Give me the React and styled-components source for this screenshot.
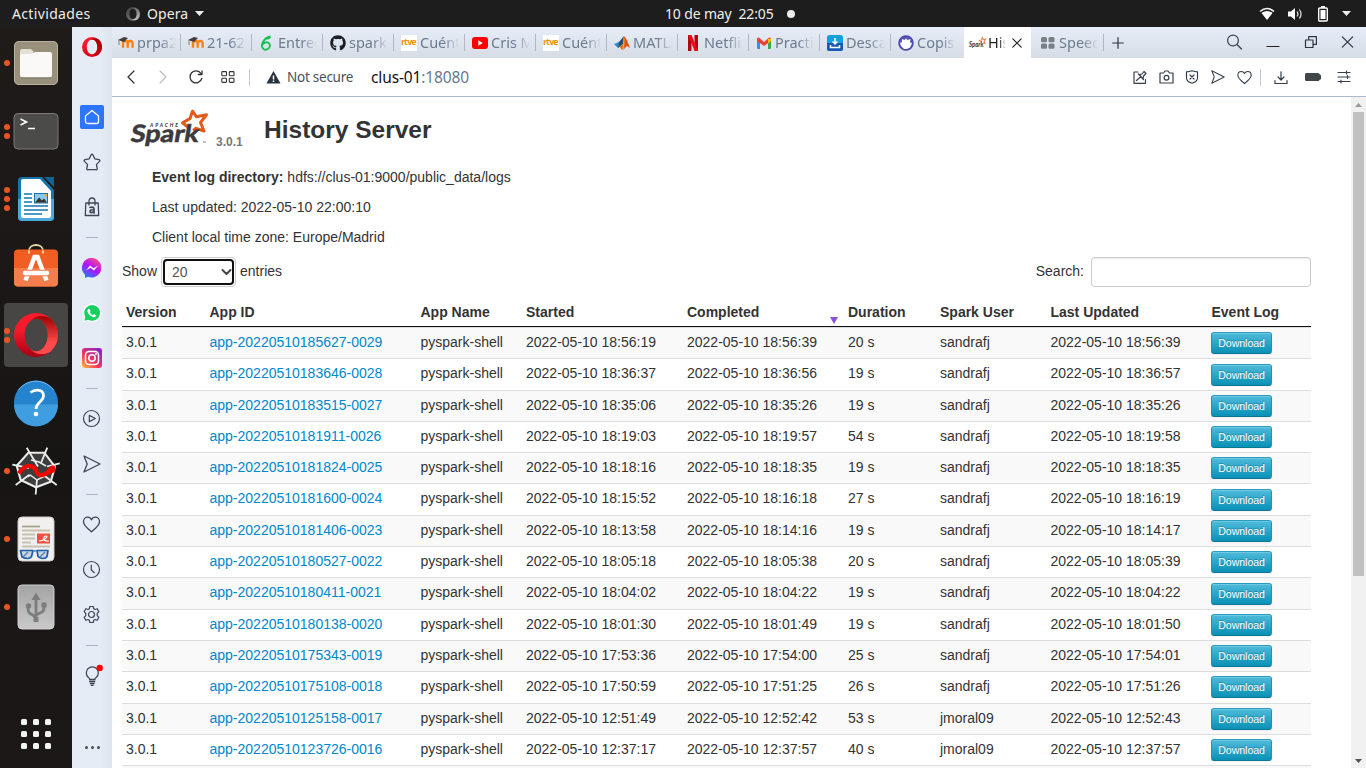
import React from "react";
import styled, { createGlobalStyle, css } from "styled-components";
import { FaGithub } from "react-icons/fa";

const Global = createGlobalStyle`
  * { box-sizing: border-box; }
  html, body { margin: 0; padding: 0; overflow: hidden; }
  body { font-family: "Liberation Sans", Arial, sans-serif; font-size: 14px; line-height: 20px; color: #333; }
  svg { display: block; flex: none; overflow: visible; }
`;

const ui = css`font-family: "Noto Sans", "Open Sans", sans-serif;`;

const Desktop = styled.div`
  width: 1366px; height: 768px; overflow: hidden;
  display: flex; flex-direction: column; background: #1b1817;
`;
const TopBar = styled.header`
  ${ui}
  height: 27px; flex: none; background: #1d1d1d; color: #eeeeec;
  display: grid; grid-template-columns: 126px 539px 1fr auto; align-items: center;
  font-size: 14px; line-height: 27px;
`;
const Activities = styled.div`padding-left: 12px; letter-spacing: 0.35px;`;
const AppMenu = styled.div`display: flex; align-items: center; gap: 7px; letter-spacing: 0.1px;`;
const Clock = styled.div`display: flex; align-items: center; white-space: pre; font-size: 14px; letter-spacing: -0.15px;`;
const ClockText = styled.span`width: 122px;`;
const Bullet = styled.span`width: 8px; height: 8px; border-radius: 50%; background: #eeeeec;`;
const Tray = styled.div`display: flex; align-items: center; padding-right: 11px;`;
const Slot = styled.span`
  width: ${(p) => p.$w}px; height: 100%; flex: none;
  display: flex; align-items: center; justify-content: center;
`;
const Main = styled.div`flex: 1; display: flex; min-height: 0;`;

const Dock = styled.nav`
  width: 72px; flex: none; background: linear-gradient(180deg, #1f1b19, #171514 60%, #1c1817);
  display: flex; flex-direction: column; padding: 2px 0 0;
`;
const DockItem = styled.div`
  height: 68px; padding: 2px 4px; display: flex; align-items: center; position: relative;
`;
const DockTile = styled.div`
  width: 64px; height: 64px; border-radius: 4px; display: flex; align-items: center; justify-content: center;
  background: ${(p) => (p.$active ? "#484645" : "transparent")};
`;
const Marks = styled.div`
  position: absolute; left: 4px; top: 0; bottom: 0; width: 6px;
  display: flex; flex-direction: column; justify-content: center; gap: 3px;
`;
const Mark = styled.i`width: 6px; height: 6px; border-radius: 50%; background: #e95420;`;
const AppsGrid = styled.div`
  margin: auto 0 19px 21px; display: grid; grid-template-columns: repeat(3, 6px); gap: 6px;
`;
const AppsDot = styled.i`width: 6px; height: 6px; border-radius: 1.5px; background: #f2f2f0;`;

const Browser = styled.div`flex: 1; display: flex; min-width: 0; background: #e6ecf6;`;
const SideBar = styled.aside`
  width: 40px; flex: none; display: flex; flex-direction: column; align-items: center;
  background: linear-gradient(90deg, #e5ecf6 0 70%, #dde4ee); color: #3c4654;
`;
const SideLogo = styled.div`height: 67px; padding-top: 10px;`;
const SideItem = styled.div`
  height: 45px; width: 40px; padding-top: 1px; flex: none; display: flex; align-items: center; justify-content: center;
`;
const SideRule = styled.div`height: 16px; flex: none; padding-top: 8px; &::before { content: ""; display: block; width: 12px; height: 1px; background: #a9b4c6; }`;
const HomeTile = styled.div`
  width: 24px; height: 24px; border-radius: 2px; background: #2d74ff; color: #fff;
  display: flex; align-items: center; justify-content: center;
`;
const SideMore = styled.div`margin: auto 0 19px; display: flex; gap: 3px;`;
const MoreDot = styled.i`width: 3px; height: 3px; border-radius: 50%; background: #454d59;`;

const Window = styled.div`flex: 1; min-width: 0; display: flex; flex-direction: column; background: #fff;`;
const TabStrip = styled.div`
  height: 31px; flex: none; display: flex; align-items: stretch;
  background: linear-gradient(180deg, #e6edf8, #d6dde6);
`;
const Tab = styled.div`
  ${ui}
  width: ${(p) => p.$w || 71}px; flex: none; display: flex; align-items: center; gap: ${(p) => p.$gap ?? 3}px;
  padding-left: ${(p) => p.$pl ?? 7}px; position: relative; color: ${(p) => (p.$active ? "#222" : "#6c7b8e")};
  background: ${(p) => (p.$active ? "#fff" : "transparent")};
  border-radius: 2px 2px 0 0;
`;
const TabRule = styled.i`position: absolute; right: 0; top: 7px; width: 1px; height: 17px; background: #aeb8c6;`;
const TabLabel = styled.span`
  width: ${(p) => p.$w || 39}px; overflow: hidden; white-space: nowrap; font-size: 14.5px; line-height: 20px; margin-top: -1px;
  -webkit-mask-image: linear-gradient(90deg, #000 60%, transparent 100%);
  mask-image: linear-gradient(90deg, #000 60%, transparent 100%);
`;
const StripSpace = styled.div`flex: 1;`;
const ToolBar = styled.div`
  height: 39px; flex: none; border-bottom: 1px solid #acb9cc; background: #fff; color: #36404c;
  display: flex; align-items: center; padding: 0 4px 0 3px;
`;
const ToolRule = styled.i`width: 1px; height: 17px; background: #c5cad1; flex: none;`;
const Security = styled.span`${ui} width: 84px; padding-left: 6px; font-size: 13.5px; letter-spacing: -0.25px; color: #48515c; white-space: nowrap;`;
const Address = styled.span`${ui} flex: 1; padding-left: 6px; font-size: 15.5px; letter-spacing: -0.12px; color: #69788c;`;
const Host = styled.span`color: #111;`;

const View = styled.div`flex: 1; min-height: 0; display: flex;`;
const Page = styled.main`flex: 1; min-width: 0; overflow: hidden; padding: 12px 40px 0 10px;`;
const PageHead = styled.div`height: 50px; padding-left: 8px; display: flex;`;
const Version = styled.span`width: 52px; padding-left: 4px; margin-top: 23px; font-size: 12px; font-weight: bold; color: #777;`;
const Title = styled.h3`margin: 1px 0 0; font-size: 24.5px; line-height: 40px; font-weight: bold;`;
const Facts = styled.ul`list-style: none; margin: 8px 0 0; padding: 0 0 0 30px;`;
const Fact = styled.li`height: 30px; line-height: 20px;`;
const Controls = styled.div`height: 30px; display: flex; align-items: flex-start; justify-content: space-between;`;
const Control = styled.label`display: flex; line-height: 28px;`;
const Picker = styled.span`
  width: 75px; height: 30px; margin: 0 4px; border: 1px solid #ccc; border-radius: 4px; padding: 1px; display: block;
`;
const PickerInner = styled.span`
  height: 26px; border: 2px solid #101010; border-radius: 4px; color: #555; padding: 0 0 0 7px;
  display: flex; align-items: center; justify-content: space-between; line-height: 22px;
`;
const Search = styled.input`
  width: 220px; height: 30px; margin-left: 7px; border: 1px solid #ccc; border-radius: 4px; background: #fff;
  box-shadow: inset 0 1px 1px rgba(0, 0, 0, 0.075); outline: none;
`;
const Table = styled.div`margin-top: 10px;`;
const cols = css`display: grid; grid-template-columns: 83.5px 211px 105.5px 161px 161px 92px 110.5px 161px 1fr;`;
const HeadRow = styled.div`${cols} height: 30px; border-bottom: 1px solid #111; font-weight: bold;`;
const HeadCell = styled.div`padding: 5px 4px 0; position: relative; white-space: nowrap;`;
const SortMark = styled.i`
  position: absolute; right: 6px; bottom: 2px; border: 4px solid transparent; border-top: 7px solid #8a55dc; border-bottom: 0;
`;
const Row = styled.div`
  ${cols} height: 31.31px; border-top: 1px solid #ddd; background: ${(p) => (p.$odd ? "#f9f9f9" : "#fff")};
`;
const Cell = styled.div`padding: 4px 4px 0; white-space: nowrap;`;
const Link = styled.a`color: #0088cc; text-decoration: none;`;
const Download = styled.button`
  display: block; width: 61px; height: 22px; margin: 0.22px 0 0 -0.4px; padding: 0; border: 1px solid #1f8fb0;
  border-color: #2a9cbd #1f93b4 #0c7896; border-radius: 3px;
  background: linear-gradient(180deg, #4fbbdb, #0891b6); color: #fff;
  font: 10.5px/20px "Liberation Sans", Arial, sans-serif; text-shadow: 0 -1px 0 rgba(0, 0, 0, 0.25);
  box-shadow: inset 0 1px 0 rgba(255, 255, 255, 0.2), 0 1px 2px rgba(0, 0, 0, 0.05);
`;
const ScrollTrack = styled.div`
  width: 15px; flex: none; background: #f1f1f1; display: flex; flex-direction: column; align-items: center; justify-content: space-between;
`;
const ScrollThumb = styled.div`width: 11px; height: 464px; background: #c1c1c1; margin-bottom: auto;`;
const ScrollCap = styled.div`height: 15px; display: flex; align-items: center;`;

const Line = ({ w = 16, h = w, box, sw = 1.2, children, color = "currentColor" }) => (
  <svg width={w} height={h} viewBox={box || `0 0 ${w} ${h}`} fill="none" stroke={color} strokeWidth={sw} strokeLinejoin="round" strokeLinecap="round">
    {children}
  </svg>
);

const OperaRing = ({ size = 20, mono, light }) => {
  const id = mono ? "om" : light ? "ol" : "od";
  return (
    <svg width={size} height={size} viewBox="0 0 24 24">
      <defs>
        <linearGradient id={`${id}a`} x1="0" y1="0" x2="0" y2="1">
          <stop offset="0" stopColor={mono ? "#444" : "#ff1b2d"} />
          <stop offset=".4" stopColor={mono ? "#555" : "#f31a2b"} />
          <stop offset="1" stopColor={mono ? "#6a6a6a" : light ? "#a70014" : "#e00012"} />
        </linearGradient>
        <linearGradient id={`${id}b`} x1="0" y1="0" x2="0" y2="1">
          <stop offset="0" stopColor={mono ? "#666" : "#9c0000"} />
          <stop offset=".7" stopColor={mono ? "#aaa" : light ? "#ff4b4b" : "#c40010"} />
          <stop offset="1" stopColor={mono ? "#bbb" : light ? "#ff4b4b" : "#d40010"} />
        </linearGradient>
      </defs>
      <path fillRule="evenodd" fill={`url(#${id}a)`} d="M12 0a12 12 0 1 0 0 24a12 12 0 1 0 0-24zM12.100 3.100c3.500 0 6.300 4 6.300 8.900s-2.800 8.900-6.300 8.900s-6.300-4-6.300-8.900s2.800-8.900 6.300-8.900z" />
      <path fill={`url(#${id}b)`} d="M8.050 5.240c1.720-2.234 4.280-3.654 7.140-3.654c1.760 0 3.400.54 4.810 1.470A12 12 0 0 1 20 20.945c-1.400.934-3.050 1.470-4.800 1.470c-2.860 0-5.420-1.418-7.140-3.654C9.200 20.100 10.600 20.900 12.100 20.900c3.500 0 6.300-4 6.300-8.900s-2.800-8.900-6.300-8.900c-1.500 0-2.900.8-4.050 2.140z" />
    </svg>
  );
};

const Heart = ({ w = 16 }) => (
  <Line w={w} h={w} box="0 0 18 18" sw={1.3}><path d="M9 16.300C5 13 1 10 1 6.300C1 3.500 3 1.700 5.200 1.700C7 1.700 8.300 2.800 9 4.300C9.700 2.800 11 1.700 12.800 1.700C15 1.700 17 3.500 17 6.300C17 10 13 13 9 16.300z" /></Line>
);
const Send = ({ w = 16 }) => (
  <Line w={w} h={w} box="0 0 18 18" sw={1.3}><path d="M1 1l16 8L1 17l3.200-8z" /></Line>
);

const FilesIcon = () => (
  <svg width="46" height="46"><rect x="1" y="1" width="44" height="44" rx="5" fill="#99907b" /><rect x="1.500" y="1.500" width="43" height="43" rx="4.500" fill="none" stroke="#b9b19f" />
    <path d="M7 16V11a2 2 0 0 1 2-2h9l3 3h-1v8H7z" fill="#e3dfd3" /><path d="M7 16q0-2 2-2h9l4-2h15a2 2 0 0 1 2 2v21a2.500 2.500 0 0 1-2.500 2.500h-27A2.500 2.500 0 0 1 7 35z" fill="#faf9f8" /><path d="M8 38h30" stroke="#777060" /></svg>
);
const TerminalIcon = () => (
  <svg width="46" height="38"><rect x="1" y="1.500" width="44" height="35.500" rx="4" fill="#4b4b4a" stroke="#7a7978" /><path d="M7.500 7l6 3-6 3M15 16.500h7" fill="none" stroke="#fff" strokeWidth="1.600" /></svg>
);
const WriterIcon = () => (
  <svg width="38" height="46"><path d="M5 1h20l12 13v27a4 4 0 0 1-4 4H5a4 4 0 0 1-4-4V5a4 4 0 0 1 4-4z" fill="#1375ac" /><path d="M1 23h36v18a4 4 0 0 1-4 4H5a4 4 0 0 1-4-4z" fill="#4ba9dc" />
    <path d="M6 3h17l11 12v25a2 2 0 0 1-2 2H6a2 2 0 0 1-2-2V5a2 2 0 0 1 2-2z" fill="#fff" /><path d="M27 1h10v10z" fill="#0d659a" />
    <path d="M7 18h8M7 22h8M7 26h8M7 30h24M7 34h24M7 38h18" stroke="#1578b1" strokeWidth="1.700" /><rect x="17.500" y="17.500" width="13" height="9.500" fill="#8ec7e8" stroke="#1578b1" /><path d="M18 26.500l4-5 3 3 2-2 3 4z" fill="#333" /><path d="M27 18h3v3z" fill="#f2ac20" /></svg>
);
const SoftwareIcon = () => (
  <svg width="46" height="46"><path d="M16 7c0-8 14-8 14 0" fill="none" stroke="#e8d7a5" strokeWidth="1.800" /><rect x="1" y="5.500" width="44" height="37" rx="4" fill="#f15e24" /><path d="M1 24h44v14.500a4 4 0 0 1-4 4H5a4 4 0 0 1-4-4z" fill="#f47d4c" />
    <path d="M16 6.500v3M30 6.500v3" stroke="#e8d7a5" strokeWidth="1.800" /><path d="M12.500 36.500L21.500 13h3l9 23.500" fill="none" stroke="#fff" strokeWidth="4.500" /><path d="M12 29h22" stroke="#f47d4c" strokeWidth="6.500" strokeLinecap="round" /><path d="M12 29h22" stroke="#fff" strokeWidth="4.500" strokeLinecap="round" /></svg>
);
const HelpIcon = () => (
  <svg width="46" height="46"><circle cx="23" cy="22.500" r="22" fill="#2684cf" /><path d="M1 24.500h44a22 22 0 0 1-44 0z" fill="#3f9ee0" /><path d="M5 10.500a22 22 0 0 1 36 0" fill="none" stroke="#6db9ee" />
    <path d="M17.500 12.500c2-1.500 4-2.300 6.500-2.300c4.500 0 6.500 2.500 6.500 5.800c0 5.500-7.500 6-7.500 13" fill="none" stroke="#fff" strokeWidth="2.700" /><circle cx="23" cy="34" r="2.300" fill="#fff" /></svg>
);
const SpyderIcon = () => (
  <svg width="50" height="50"><path d="M17.300 6.700h16L44 20.700l-4.300 15L25 41.300 9.700 34l-4-14.300z" fill="#3d3d3d" /><g fill="none" stroke="#ececec">
    <path strokeWidth="2.100" d="M17.300 6.700h16L44 20.700l-4.300 15L25 41.300 9.700 34l-4-14.300z" />
    <path strokeWidth="1.800" d="M15.700 1.700L27 20.500M36.300 1.700L30 17M48.700 17.300L36 20.500M45.700 39L31 28M24.700 48.500L26 33M4.700 39L18 29M1.300 18.700L18 22" />
    <path strokeWidth="1.500" d="M20 14l8 2 7 4M34 30l-8 4-7-5-2 2" /></g>
    <path d="M8 27.500Q13 19.500 18.500 20t7 5.500 7.500 3 6-5" fill="none" stroke="#ee0800" strokeWidth="4.300" /><path d="M31 28l6-5q1-3 4-3.500 4-.5 3.500 4T38 27t-5 3.500z" fill="#ee0800" /></svg>
);
const DocViewerIcon = () => (
  <svg width="38" height="46"><rect x="1" y="1" width="36" height="44" rx="4" fill="#f1f0ee" stroke="#c9c8c5" /><path d="M5 10.500h18" stroke="#a8a18d" strokeWidth="1.800" /><path d="M5 14.500h28M5 18.500h13M5 22.500h13M5 26.500h9M5 30.500h28" stroke="#c6c1b1" strokeWidth="1.800" />
    <rect x="20" y="17.500" width="13" height="10" fill="#f2503f" /><path d="M22 25c5 0 10-5 7-5s-4 6 3 5" fill="none" stroke="#fff" strokeWidth="1.200" />
    <path d="M3.500 34.500h12.500l-1.500 6q-1 2-4 2T5 41zM20 34.500h11l-1 6q-1 2-4 2t-5-2z" fill="#ccd3da" stroke="#1d5fa8" strokeWidth="1.700" strokeLinejoin="round" /><path d="M16 35.500q2-1.500 4 0M6 41l5-5M23 41l5-5" fill="none" stroke="#4a82bd" strokeWidth="1.300" /></svg>
);
const UsbIcon = () => (
  <svg width="38" height="46"><defs><linearGradient id="ub" x1="0" y1="0" x2="0" y2="1"><stop offset="0" stopColor="#a4a4a4" /><stop offset="1" stopColor="#c9c9c9" /></linearGradient></defs><rect x="1" y="1" width="36" height="44" rx="4" fill="url(#ub)" stroke="#cfcfcf" />
    <g fill="none" stroke="#7d7d7d" strokeWidth="2.800"><path d="M19 14v24M19 33l-6-3.500q-2-1-2-5.500M19 31l6-3q2-1 2-6" /></g><path d="M14.500 16L19 8.500l4.500 7.500z" fill="#7d7d7d" /><rect x="16.500" y="33" width="5" height="5" fill="#7d7d7d" /><circle cx="11.500" cy="22" r="2.700" fill="#7d7d7d" /><rect x="24.500" y="18.500" width="5" height="5" fill="#7d7d7d" /></svg>
);

const Moodle = () => (
  <svg width="16" height="16"><path d="M5 12.800V7.500M5 8.500Q5 6 7.300 6t2.400 2.500V12.800M9.700 8.500Q9.700 6 12.200 6t2.400 2.500V12.800" fill="none" stroke="#f98012" strokeWidth="2.400" /><path d="M0 5l6-3 4 1-4 4-3-1z" fill="#443d3a" /><path d="M1 5v5" stroke="#8b7b6d" /></svg>
);
const Overleaf = () => (
  <svg width="16" height="16"><path d="M11.500 1.500Q6.500 2.500 4 7t.5 7Q7.500 16 10 13t-1-5.500Q6 6.500 3.500 9.500M5.500 3.500q3.500.8 6-1.500" fill="none" stroke="#13c04f" strokeWidth="1.800" /></svg>
);
const RtveTile = styled.span`
  ${ui} width: 16px; height: 16px; background: #fff; color: #f39200; font-size: 9px; line-height: 14px; font-weight: bold;
  letter-spacing: -0.9px; flex: none; white-space: nowrap;
`;
const YouTube = () => (<svg width="16" height="16"><rect y="2" width="16" height="12" rx="3" fill="#f00" /><path d="M6.300 5.300v5.400L10.800 8z" fill="#fff" /></svg>);
const Matlab = () => (<svg width="16" height="16"><path d="M0 9l5-2 3 2-4 4z" fill="#2c8fc9" /><path d="M5 7l5-6-1 8-5 4z" fill="#264f72" /><path d="M10 1q2 1 6 12l-3-2-3 3-2 1-2-3 3-3z" fill="#d9541a" /><path d="M10 1q1 5 0 13l-2 1z" fill="#f5a623" /></svg>);
const Netflix = () => (<svg width="16" height="16"><path d="M3 0h3.500v16H3zM9.500 0H13v16H9.500z" fill="#b1060f" /><path d="M3 0h3.500L13 16H9.500z" fill="#ee0a16" /></svg>);
const Gmail = () => (<svg width="16" height="16"><path d="M1 4.500h3v9.500H2a1 1 0 0 1-1-1z" fill="#4285f4" /><path d="M12 4.500h3V13a1 1 0 0 1-1 1h-2z" fill="#34a853" /><path d="M1 3.500q1-2 3 0l4 3.500 4-3.500q2-2 3 0V6l-7 5-7-5z" fill="#ea4335" /><path d="M12 4l3-.5V6l-3 2.500z" fill="#fbbc04" /></svg>);
const DownTile = () => (<svg width="16" height="16"><rect width="16" height="16" rx="2.500" fill="#12a0e0" /><path d="M0 8h16v5.500a2.500 2.500 0 0 1-2.500 2.500h-11A2.500 2.500 0 0 1 0 13.500z" fill="#1559b5" /><path d="M8 3v5.500M5.500 6.500L8 9l2.500-2.500M3.500 10v2.500h9V10" fill="none" stroke="#fff" strokeWidth="1.500" /></svg>);
const Copis = () => (<svg width="16" height="16"><circle cx="8" cy="8" r="7" fill="#5a55b8" stroke="#4a45b0" strokeWidth="1.500" /><path d="M4 4l2.500 1L8 3.500 9.500 5l3-1-.5 3 2 1.500-2 4-3 1.500H6L3 11 2 8l2-1z" fill="#fff" /></svg>);
const SpeedDial = () => (<svg width="14" height="12"><g fill="#7b8087"><rect width="6" height="5.300" rx="1.500" /><rect x="7.500" width="6" height="5.300" rx="1.500" /><rect y="6.500" width="6" height="5.300" rx="1.500" /><rect x="7.500" y="6.500" width="6" height="5.300" rx="1.500" /></g></svg>);

const SparkStar = () => (
  <path d="M58.500 18.500L52.500 13.800L60 9.600L62.500 2.200L66.500 7.800L76.500 5.800L70.500 13.500L74 22L66 19.300L63 21.500" fill="none" stroke="#e25a1c" strokeWidth="3" strokeLinejoin="round" />
);
const SparkLogo = () => (
  <svg width="82" height="42" viewBox="0 0 82 42">
    <SparkStar />
    <text x="20" y="17.700" fontFamily="Lato" fontWeight="900" fontStyle="italic" fontSize="5" fill="#3c3a3e" textLength="28">APACHE</text>
    <g transform="skewX(5)">
      <text x="-1" y="33" fontFamily="Lato" fontWeight="700" fontSize="24" fill="#3c3a3e" stroke="#3c3a3e" strokeWidth=".6" textLength="68" lengthAdjust="spacingAndGlyphs" transform="skewX(-14)"><tspan dx="6">Spark</tspan></text>
    </g>
    <path d="M73 33h3" stroke="#888" />
  </svg>
);
const SparkFavicon = () => (
  <svg width="17" height="16" viewBox="0 0 17 16">
    <path d="M12 7.500L10.500 5.500l2-.5.800-2.500 1.200 2 2-.3-1.200 2 .7 2.300-2-.7" fill="none" stroke="#ee8a5c" strokeWidth="1.200" />
    <text x="0" y="11.500" fontFamily="Lato" fontWeight="900" fontStyle="italic" fontSize="7" fill="#444" textLength="14.500" lengthAdjust="spacingAndGlyphs">Spark</text>
  </svg>
);

const tabs = [
  ["prpa2", <Moodle />], ["21-62", <Moodle />], ["Entreg", <Overleaf />], ["spark", <FaGithub size={16} color="#1b1f23" />],
  ["Cuénta", <RtveTile>rtve</RtveTile>], ["Cris M", <YouTube />], ["Cuénta", <RtveTile>rtve</RtveTile>], ["MATLA", <Matlab />],
  ["Netflix", <Netflix />], ["Practi", <Gmail />], ["Descar", <DownTile />], ["Copist", <Copis />],
];

const dock = [
  [<FilesIcon />, 1], [<TerminalIcon />, 2], [<WriterIcon />, 3], [<SoftwareIcon />, 0], [<OperaRing size={44} light />, 2, true],
  [<HelpIcon />, 0], [<SpyderIcon />, 1], [<DocViewerIcon />, 1], [<UsbIcon />, 1],
];

const rows = [
  ["185627-0029", "18:56:19", "18:56:39", "20 s", "sandrafj", "18:56:39"],
  ["183646-0028", "18:36:37", "18:36:56", "19 s", "sandrafj", "18:36:57"],
  ["183515-0027", "18:35:06", "18:35:26", "19 s", "sandrafj", "18:35:26"],
  ["181911-0026", "18:19:03", "18:19:57", "54 s", "sandrafj", "18:19:58"],
  ["181824-0025", "18:18:16", "18:18:35", "19 s", "sandrafj", "18:18:35"],
  ["181600-0024", "18:15:52", "18:16:18", "27 s", "sandrafj", "18:16:19"],
  ["181406-0023", "18:13:58", "18:14:16", "19 s", "sandrafj", "18:14:17"],
  ["180527-0022", "18:05:18", "18:05:38", "20 s", "sandrafj", "18:05:39"],
  ["180411-0021", "18:04:02", "18:04:22", "19 s", "sandrafj", "18:04:22"],
  ["180138-0020", "18:01:30", "18:01:49", "19 s", "sandrafj", "18:01:50"],
  ["175343-0019", "17:53:36", "17:54:00", "25 s", "sandrafj", "17:54:01"],
  ["175108-0018", "17:50:59", "17:51:25", "26 s", "sandrafj", "17:51:26"],
  ["125158-0017", "12:51:49", "12:52:42", "53 s", "jmoral09", "12:52:43"],
  ["123726-0016", "12:37:17", "12:37:57", "40 s", "jmoral09", "12:37:57"],
];
const heads = ["Version", "App ID", "App Name", "Started", "Completed", "Duration", "Spark User", "Last Updated", "Event Log"];

const SystemBar = () => (
  <TopBar>
    <Activities>Actividades</Activities>
    <AppMenu><OperaRing size={14} mono /><span>Opera</span><svg width="9" height="5"><path d="M0 0h9L4.500 5z" fill="#eee" /></svg></AppMenu>
    <Clock><ClockText>10 de may  22:05</ClockText><Bullet /></Clock>
    <Tray>
      <Slot $w={28}><svg width="16" height="14"><path d="M1 4.500Q8-1.500 15 4.500" fill="none" stroke="#f2f2f2" strokeWidth="1.600" /><path d="M2.500 6Q8 2 13.500 6L8 13z" fill="#fff" /></svg></Slot>
      <Slot $w={28}><svg width="16" height="14"><path d="M1 4.500h3L8 1v12L4 9.500H1z" fill="#fff" /><path d="M10 4.500q2 2.500 0 5M12.300 2.500q3.500 4.500 0 9" fill="none" stroke="#e5e5e5" strokeWidth="1.200" /></svg></Slot>
      <Slot $w={28}><svg width="12" height="16"><path d="M4 0h4v2H4z" fill="#fff" /><rect x="1.700" y="2" width="8.600" height="13" rx="1" fill="none" stroke="#fff" strokeWidth="1.400" /><rect x="3.500" y="4" width="5" height="9" fill="#fff" /></svg></Slot>
      <Slot $w={18}><svg width="9" height="5"><path d="M0 0h9L4.500 5z" fill="#eee" /></svg></Slot>
    </Tray>
  </TopBar>
);

const Launcher = () => (
  <Dock>
    {dock.map(([icon, n, active], i) => (
      <DockItem key={i}>
        <DockTile $active={active}>{icon}</DockTile>
        <Marks>{Array.from({ length: n }, (_, k) => <Mark key={k} />)}</Marks>
      </DockItem>
    ))}
    <AppsGrid>{Array.from({ length: 9 }, (_, k) => <AppsDot key={k} />)}</AppsGrid>
  </Dock>
);

const OperaSide = () => (
  <SideBar>
    <SideLogo><OperaRing size={20} /></SideLogo>
    <SideItem><HomeTile><Line w={16} sw={1.3}><path d="M1.500 7L8 1.500 14.500 7v5.500a2 2 0 0 1-2 2h-9a2 2 0 0 1-2-2z" /></Line></HomeTile></SideItem>
    <SideItem><Line w={18} h={18} sw={1.3}><path d="M8 2q1-1.500 2 0l1.800 3.800 4.200.8q1.500.5.500 1.800l-3 3 .7 4.300q0 1.500-1.500 1H5.300q-1.500.5-1.500-1l.7-4.300-3-3q-1-1.300.5-1.800l4.200-.8z" /></Line></SideItem>
    <SideItem><Line w={16} h={20} sw={1.3}><path d="M1.800 6h12.400l.5 12.500H1.300zM5 8V4.500Q5 1 8 1t3 3.500V8" /><path d="M6 10.500q4-1 4 1.500v4M10 12.800q-4-.3-4 1.700t4 .3" strokeWidth="1.700" /></Line></SideItem>
    <SideRule />
    <SideItem><svg width="20" height="20"><defs><linearGradient id="ms" x1=".2" y1="1" x2=".8" y2="0"><stop offset="0" stopColor="#1b85ff" /><stop offset=".5" stopColor="#b012ff" /><stop offset="1" stopColor="#ff4f7e" /></linearGradient></defs><path d="M10 0a9.700 9.700 0 1 1-4 18.700L3 20v-3.300A9.700 9.700 0 0 1 10 0z" fill="url(#ms)" /><path d="M4 12.500l4-5 3.500 2.700L16 7.500l-4 5-3.500-2.700z" fill="#fff" /></svg></SideItem>
    <SideItem><svg width="20" height="20"><path d="M.5 19.500L2 14.500A9.300 9.300 0 1 1 5.500 18z" fill="#fff" /><path d="M2.300 17.700l1-3.800A7.900 7.900 0 1 1 6.200 16.800z" fill="#15d162" /><path d="M7 5.500l1.700 2.500-1 1q1 2.200 3.300 3.200l1-1.200 2.500 1.500q-1 2-3 1.700Q6.500 13 5.300 8 5.500 6 7 5.500z" fill="#fff" /></svg></SideItem>
    <SideItem><svg width="20" height="20"><defs><linearGradient id="ig" x1="0" y1="1" x2=".8" y2="0"><stop offset="0" stopColor="#ffc83c" /><stop offset=".4" stopColor="#fb3958" /><stop offset="1" stopColor="#8a22c6" /></linearGradient></defs><rect width="20" height="20" rx="3" fill="url(#ig)" /><rect x="3.500" y="3.500" width="13" height="13" rx="3.500" fill="none" stroke="#fff" strokeWidth="1.500" /><circle cx="10" cy="10" r="3.200" fill="none" stroke="#fff" strokeWidth="1.500" /><circle cx="14" cy="6" r="1" fill="#fff" /></svg></SideItem>
    <SideRule />
    <SideItem><Line w={18} box="0.5 0.5 18 18"><circle cx="9" cy="9" r="8" /><path d="M6.800 5.900l6 3.100-6 3.100z" /></Line></SideItem>
    <SideItem><Send w={18} /></SideItem>
    <SideRule />
    <SideItem><Line w={18} box="0.500 0.500 18 18" sw={1.3}><path d="M9 16.300C5 13 1 10 1 6.300C1 3.500 3 1.700 5.200 1.700C7 1.700 8.300 2.800 9 4.300C9.700 2.800 11 1.700 12.800 1.700C15 1.700 17 3.500 17 6.300C17 10 13 13 9 16.300z" /></Line></SideItem>
    <SideItem><Line w={18} box="0.5 0.5 18 18"><circle cx="9" cy="9" r="8" /><path d="M8.800 4.500v5l3 2.700" /></Line></SideItem>
    <SideItem><Line w={18} box="0.5 0.5 18 18"><circle cx="9" cy="9" r="3" /><path d="M7.300 1h3.400l.5 2.300 1.300.7 2.200-.8 1.700 3-1.700 1.700v2.200l1.700 1.700-1.700 3-2.200-.8-1.300.7-.5 2.300H7.300l-.5-2.300-1.300-.7-2.200.8-1.700-3 1.700-1.700V7.900L1.600 6.200l1.700-3 2.200.8 1.300-.7z" /></Line></SideItem>
    <SideRule />
    <SideItem><svg width="20" height="22" fill="none" stroke="#3c4654" strokeWidth="1.300"><path d="M7.700 14.500q0-1.300-1.500-2.300a6 6 0 1 1 8.200 0q-1.500 1-1.500 2.300zM7.200 16.500h6M7.800 18.500h4.800M8.800 20.300h2.800" /><circle cx="17.700" cy="3" r="3.200" fill="#f00" stroke="none" /></svg></SideItem>
    <SideMore><MoreDot /><MoreDot /><MoreDot /></SideMore>
  </SideBar>
);

const Tabs = () => (
  <TabStrip>
    {tabs.map(([label, icon], i) => {
      const first = i === 0, last = i === tabs.length - 1;
      return (
        <Tab key={i} $w={first ? 69 : 71} $pl={first ? 6 : 7}>
          {icon}<TabLabel>{label}</TabLabel>{!last && <TabRule />}
        </Tab>
      );
    })}
    <Tab $w={2} $pl={0} />
    <Tab $active $w={67} $pl={5} $gap={2}><SparkFavicon /><TabLabel $w={18}>Histo</TabLabel><Slot $w={18}><Line w={10} sw={1.2} color="#222"><path d="M.8.8l8.400 8.400M9.200.8L.8 9.200" /></Line></Slot></Tab>
    <Tab $w={73} $pl={10} $gap={4}><SpeedDial /><TabLabel>Speed</TabLabel><TabRule /></Tab>
    <Slot $w={28}><Line w={12} sw={1.2} color="#2c3540"><path d="M6 .7v10.600M.7 6h10.600" /></Line></Slot>
    <StripSpace />
    <Slot $w={39}><Line w={16} h={18} sw={1.2} color="#39414c"><circle cx="7" cy="6.500" r="5.400" /><path d="M11 10.500l4.500 4.500" /></Line></Slot>
    <Slot $w={39}><Line w={12} h={12} sw={1.2} color="#222"><path d="M0 9.500h12" /></Line></Slot>
    <Slot $w={38}><Line w={12} h={14} sw={1.2} color="#2c3540"><path d="M.5 4h7.500v7.500H.5zM3.700 4V.7h7.700v7.700H8" /></Line></Slot>
    <Slot $w={36}><Line w={12} h={14} sw={1.2} color="#2c3540"><path d="M.3.800l10.400 10.400M10.700.8L.3 11.200" /></Line></Slot>
  </TabStrip>
);

const Tools = () => (
  <ToolBar>
    <Slot $w={32}><Line w={8} h={14} sw={1.3} color="#333"><path d="M7 1L1 7l6 6" /></Line></Slot>
    <Slot $w={32}><Line w={8} h={14} color="#b9bcc0"><path d="M1 1l6 6-6 6" /></Line></Slot>
    <Slot $w={33}><Line w={14} sw={1.3} color="#333"><path d="M12.800 8.500A6 6 0 1 1 12 3.500M13 .8V4.500H9.300" /></Line></Slot>
    <Slot $w={32}><Line w={14} h={12} color="#333" sw={1.1}><rect x=".8" y=".6" width="4.700" height="4.200" rx=".8" /><rect x="8.300" y=".6" width="4.700" height="4.200" rx=".8" /><rect x=".8" y="7.200" width="4.700" height="4.200" rx=".8" /><rect x="8.300" y="7.200" width="4.700" height="4.200" rx=".8" /></Line></Slot>
    <Slot $w={5} /><ToolRule /><Slot $w={16} />
    <svg width="15" height="14"><path d="M7.500 1L14.500 13.500H.5z" fill="#28323e" /><path d="M7.500 5.500v4M7.500 10.500v1.500" stroke="#fff" strokeWidth="1.500" /></svg>
    <Security>Not secure</Security>
    <Address><Host>clus-01</Host>:18080</Address>
    <Slot $w={26}><Line w={14}><path d="M5 2H1v11.300h11.500V9.500M6.500 4.500L9 4l2-2.500L13 3.500 10.500 6l-.5 3zM3.500 10.500L8 6.500M5.500 4l5 5.500" /></Line></Slot>
    <Slot $w={26}><Line w={15} h={14}><path d="M1 3h3.500L6 1h3l1.500 2H14v10H1z" /><circle cx="7.500" cy="7.800" r="2.400" /></Line></Slot>
    <Slot $w={26}><Line w={14}><path d="M7 .8q3 1 5.500 1V8q0 3.500-5.500 5.200Q1.500 11.500 1.500 8V1.800q2.500 0 5.500-1zM5 5l4 4M9 5L5 9" /></Line></Slot>
    <Slot $w={26}><Send w={14} /></Slot>
    <Slot $w={26}><Heart w={15} /></Slot>
    <Slot $w={3} /><ToolRule />
    <Slot $w={39}><Line w={14} h={13}><path d="M7 .8v8M4 6l3 3 3-3M1 9.500v3h12v-3" /></Line></Slot>
    <Slot $w={26}><svg width="16" height="8"><rect width="14.500" height="8" rx="1.500" fill="#404749" /><rect x="12" y="1.200" width="4" height="5.600" rx="1.500" fill="#404749" /></svg></Slot>
    <Slot $w={36}><Line w={12} h={12}><path d="M0 1.500h12M0 6h12M0 10.500h12M8.500 0v3M9.500 4.500v3M3 9v3" /></Line></Slot>
  </ToolBar>
);

const History = () => (
  <Page>
    <PageHead>
      <SparkLogo />
      <Version>3.0.1</Version>
      <Title>History Server</Title>
    </PageHead>
    <Facts>
      <Fact><b>Event log directory:</b> hdfs://clus-01:9000/public_data/logs</Fact>
      <Fact>Last updated: 2022-05-10 22:00:10</Fact>
      <Fact>Client local time zone: Europe/Madrid</Fact>
    </Facts>
    <Controls>
      <Control>Show<Picker><PickerInner>20<Line w={11} h={8} sw={2} color="#444"><path d="M1.500 2l4 4 4-4" /></Line></PickerInner></Picker>entries</Control>
      <Control>Search:<Search /></Control>
    </Controls>
    <Table>
      <HeadRow>{heads.map((h) => <HeadCell key={h}>{h}{h === "Completed" && <SortMark />}</HeadCell>)}</HeadRow>
      {rows.map(([id, start, end, dur, user, upd], i) => (
        <Row key={id} $odd={i % 2 === 0}>
          <Cell>3.0.1</Cell><Cell><Link>app-20220510{id}</Link></Cell><Cell>pyspark-shell</Cell>
          <Cell>2022-05-10 {start}</Cell><Cell>2022-05-10 {end}</Cell><Cell>{dur}</Cell><Cell>{user}</Cell>
          <Cell>2022-05-10 {upd}</Cell><Cell><Download>Download</Download></Cell>
        </Row>
      ))}
      <Row $odd />
    </Table>
  </Page>
);

export default function App() {
  return (
    <Desktop>
      <Global />
      <SystemBar />
      <Main>
        <Launcher />
        <Browser>
          <OperaSide />
          <Window>
            <Tabs />
            <Tools />
            <View>
              <History />
              <ScrollTrack>
                <ScrollCap><svg width="7" height="4"><path d="M0 4h7L3.500 0z" fill="#9a9a9a" /></svg></ScrollCap>
                <ScrollThumb />
                <ScrollCap><svg width="7" height="4"><path d="M0 0h7L3.500 4z" fill="#505050" /></svg></ScrollCap>
              </ScrollTrack>
            </View>
          </Window>
        </Browser>
      </Main>
    </Desktop>
  );
}
